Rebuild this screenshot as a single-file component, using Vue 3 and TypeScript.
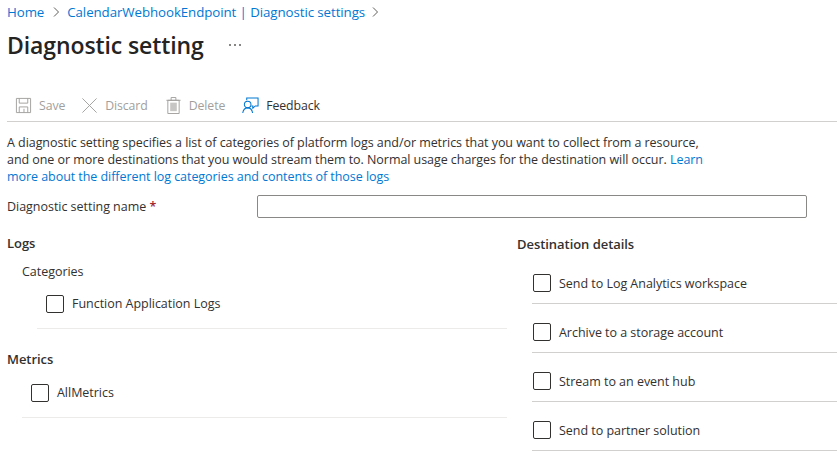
<script setup lang="ts">
const logs = ['Function Application Logs']
const dests = ['Send to Log Analytics workspace', 'Archive to a storage account', 'Stream to an event hub', 'Send to partner solution']
</script>

<template>
  <div class="page">
    <nav class="crumbs">
      <a>Home</a>
      <svg class="chev" viewBox="0 0 8 12"><path d="M2 1.5 6.5 6 2 10.5" /></svg>
      <a>CalendarWebhookEndpoint | Diagnostic settings</a>
      <svg class="chev" viewBox="0 0 8 12"><path d="M2 1.5 6.5 6 2 10.5" /></svg>
    </nav>
    <header class="title-row">
      <h1>Diagnostic setting</h1>
      <span class="more"><i></i><i></i><i></i></span>
    </header>
    <div class="toolbar">
      <span class="tool off">
        <svg viewBox="0 0 18 18" class="ico"><path d="M1.5 1.5h15v15h-15zM4.5 1.5v5h9v-5M4.5 16.5v-6h9v6M9.5 12.5v4" /></svg>
        Save
      </span>
      <span class="tool off discard">
        <svg viewBox="0 0 18 18" class="ico"><path d="M1.5 1.5 16.5 16.5M16.5 1.5 1.5 16.5" /></svg>
        Discard
      </span>
      <span class="tool off del">
        <svg viewBox="0 0 18 18" class="ico"><path d="M3 3.5h12v14H3zM1.5 3.5h15M6.5 3.5v-3h5v3" /><path class="fill" d="M5.5 6h7v9h-7z" /></svg>
        Delete
      </span>
      <span class="tool fb">
        <svg viewBox="0 0 18 18" class="ico blue"><path d="M5 3.5V1h12v8.5h-3L11.5 12V9.5H10" /><circle cx="6" cy="8" r="3.5" /><path d="M.8 17c.4-3.4 2.4-5.5 5.2-5.5s4.8 2 5.2 5.5" /></svg>
        Feedback
      </span>
    </div>
    <p class="intro">
      A diagnostic setting specifies a list of categories of platform logs and/or metrics that you want to collect from a resource,<br />
      and one or more destinations that you would stream them to. Normal usage charges for the destination will occur. <a>Learn<br />more about the different log categories and contents of those logs</a>
    </p>
    <div class="name-row">
      <label>Diagnostic setting name <span class="req">*</span></label>
      <input type="text" />
    </div>
    <div class="cols">
      <section class="left">
        <h2>Logs</h2>
        <div class="cat-label">Categories</div>
        <div v-for="l in logs" :key="l" class="row cat-row"><span class="box"></span>{{ l }}</div>
        <h2 class="metrics">Metrics</h2>
        <div class="row metric-row"><span class="box"></span>AllMetrics</div>
      </section>
      <section class="right">
        <h2>Destination details</h2>
        <div v-for="d in dests" :key="d" class="row dest-row"><span class="box"></span>{{ d }}</div>
      </section>
    </div>
  </div>
</template>

<style>
html, body { margin: 0; background: #fff; overflow: hidden; }
</style>

<style scoped>
.page {
  width: 837px;
  height: 468px;
  box-sizing: border-box;
  padding-left: 7px;
  overflow: hidden;
  font-family: "Open Sans", "Noto Sans", sans-serif;
  font-size: 12.5px;
  letter-spacing: -0.03px;
  color: #323130;
}
a { color: #0078d4; }
.crumbs { display: flex; align-items: center; height: 24px; font-size: 13.3px; letter-spacing: -0.08px; }
.chev { width: 8px; height: 12px; margin: 0 7px 0 8px; }
.chev:last-child { margin-left: 6px; }
.chev path { fill: none; stroke: #605e5c; stroke-width: 1; }
.title-row { display: flex; align-items: center; height: 42px; }
h1 { margin: 0; font-size: 23px; font-weight: 600; color: #252423; letter-spacing: -0.1px; }
.more { display: flex; gap: 3px; margin-left: 25px; }
.more i { width: 2px; height: 2px; border-radius: 50%; background: #605e5c; }
.toolbar { display: flex; align-items: center; height: 56px; padding-top: 24px; box-sizing: border-box; border-bottom: 1px solid #d2d0ce; }
.tool { display: flex; align-items: center; gap: 7px; font-size: 12.3px; letter-spacing: -0.1px; }
.off { color: #a19f9d; }
.ico { width: 17px; height: 17px; flex: none; }
.ico path, .ico circle { fill: none; stroke: #a19f9d; stroke-width: 1; }
.ico .fill { fill: #c8c6c4; stroke: none; }
.ico.blue path, .ico.blue circle { stroke: #0078d4; stroke-width: 1.1; }
.tool:first-child { margin-left: 8px; }
.discard { margin-left: 16px; }
.del { margin-left: 17px; }
.fb { margin-left: 17px; color: #323130; }
.intro { margin: 12px 0 0; line-height: 17px; letter-spacing: -0.055px; }
.name-row { display: flex; align-items: center; margin-top: 9px; height: 24px; }
.name-row label { width: 250px; }
.req { color: #a4262c; font-weight: 600; }
input { width: 550px; height: 23px; box-sizing: border-box; border: 1px solid #8a8886; border-radius: 2px; padding: 0; background: #fff; }
.cols { display: flex; margin-top: 17px; }
.left { width: 500px; }
.right { margin-left: 10px; flex: 1; }
h2 { margin: 0; font-size: 13px; font-weight: 600; line-height: 17px; letter-spacing: -0.05px; color: #323130; }
.cat-label { margin: 11px 0 0 15px; line-height: 17px; }
.row { display: flex; align-items: center; gap: 8px; border-bottom: 1px solid #edebe9; box-sizing: border-box; }
.box { width: 18px; height: 18px; box-sizing: border-box; border: 1px solid #323130; border-radius: 2px; background: #fff; flex: none; }
.cat-row { margin: 2px 0 0 30px; padding: 13px 0 0 9px; height: 47px; align-items: flex-start; }
.metrics { margin-top: 22px; }
.metric-row { margin: 0 0 0 15px; padding: 16px 0 0 9px; height: 50px; align-items: flex-start; }
.right .row { border-bottom-color: #d2d0ce; }
.dest-row { margin-left: 15px; padding: 8px 0 0 1px; height: 49px; }
.right h2 { margin-top: 1px; margin-bottom: 2px; }
</style>
